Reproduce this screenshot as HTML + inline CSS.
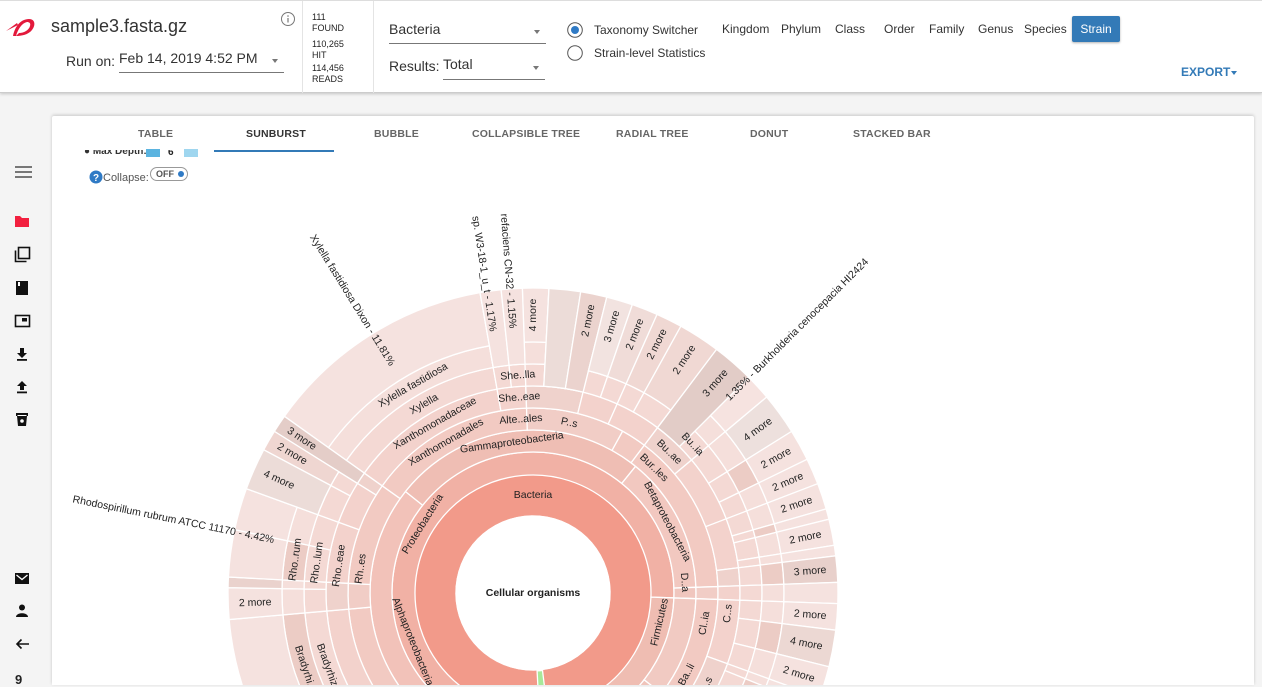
<!DOCTYPE html>
<html><head><meta charset="utf-8">
<style>
*{box-sizing:border-box;margin:0;padding:0}
body{width:1262px;height:685px;overflow:hidden;background:#f4f4f4;font-family:"Liberation Sans",sans-serif;color:#222;position:relative}
#hdr{position:absolute;left:0;top:0;width:1262px;height:93px;background:#fff;border-top:1px solid #ddd;border-bottom:1px solid #ccc;box-shadow:0 1px 3px rgba(0,0,0,.2)}
.a{position:absolute;white-space:nowrap}
.sel{position:absolute;border-bottom:1px solid #777}
.caret{position:absolute;width:0;height:0;border-left:3.5px solid transparent;border-right:3.5px solid transparent;border-top:4px solid #777}
#card{position:absolute;left:52px;top:116px;width:1202px;height:569px;background:#fff;box-shadow:0 -1px 3px rgba(0,0,0,.18);border-radius:2px 2px 0 0;overflow:hidden}
.tab{position:absolute;top:12px;font-size:10.5px;color:#666;font-weight:bold;letter-spacing:.2px}
.ic{position:absolute;left:14px}
</style></head><body>
<div id="hdr">
 <svg class="a" style="left:5px;top:13px" width="32" height="26" viewBox="0 0 32 26"><path d="M8 22 C10 12 16 5 24 5 C30 5 31 11 27 16 C23 21 16 22 11 22 L14 19 C19 19 24 16 25 12 C26 9 24 8 22 8 C17 9 13 15 11 22 Z" fill="#e3193c"/><path d="M1 17 L12 9 L13 11 Z" fill="#e3193c"/></svg>
 <div class="a" style="left:51px;top:15px;font-size:18px;color:#333">sample3.fasta.gz</div>
 <svg class="a" style="left:280px;top:10px" width="16" height="16"><circle cx="8" cy="8" r="6.5" fill="none" stroke="#777" stroke-width="1"/><rect x="7.4" y="7" width="1.2" height="4.5" fill="#777"/><circle cx="8" cy="5" r=".8" fill="#777"/></svg>
 <div class="a" style="left:66px;top:52px;font-size:14px;color:#333">Run on:</div>
 <div class="sel" style="left:119px;top:49px;width:165px;height:23px"><span style="font-size:14px;color:#333">Feb 14, 2019 4:52 PM</span><div class="caret" style="right:6px;top:9px"></div></div>
 <div class="a" style="left:302px;top:0;width:1px;height:92px;background:#e4e4e4"></div>
 <div class="a" style="left:312px;top:11px;font-size:9px;line-height:11px;color:#222">111<br>FOUND</div>
 <div class="a" style="left:312px;top:38px;font-size:9px;line-height:11px;color:#222">110,265<br>HIT</div>
 <div class="a" style="left:312px;top:62px;font-size:9px;line-height:11px;color:#222">114,456<br>READS</div>
 <div class="a" style="left:373px;top:0;width:1px;height:92px;background:#e4e4e4"></div>
 <div class="sel" style="left:389px;top:20px;width:157px;height:23px"><span style="font-size:14px;color:#333">Bacteria</span><div class="caret" style="right:6px;top:9px"></div></div>
 <div class="a" style="left:389px;top:57px;font-size:14px;color:#333">Results:</div>
 <div class="sel" style="left:443px;top:55px;width:102px;height:24px"><span style="font-size:14px;color:#333">Total</span><div class="caret" style="right:6px;top:10px"></div></div>
 <svg class="a" style="left:566px;top:20px" width="18" height="44"><circle cx="9" cy="9" r="7.3" fill="none" stroke="#555" stroke-width="1"/><circle cx="9" cy="9" r="4" fill="#2f7ac5"/><circle cx="9" cy="32" r="7.3" fill="none" stroke="#555" stroke-width="1"/></svg>
 <div class="a" style="left:594px;top:22px;font-size:12px;color:#333">Taxonomy Switcher</div>
 <div class="a" style="left:594px;top:45px;font-size:12px;color:#333">Strain-level Statistics</div>
 <div class="a" style="left:722px;top:21px;font-size:12px;color:#333">Kingdom</div>
 <div class="a" style="left:781px;top:21px;font-size:12px;color:#333">Phylum</div>
 <div class="a" style="left:835px;top:21px;font-size:12px;color:#333">Class</div>
 <div class="a" style="left:884px;top:21px;font-size:12px;color:#333">Order</div>
 <div class="a" style="left:929px;top:21px;font-size:12px;color:#333">Family</div>
 <div class="a" style="left:978px;top:21px;font-size:12px;color:#333">Genus</div>
 <div class="a" style="left:1024px;top:21px;font-size:12px;color:#333">Species</div>
 <div class="a" style="left:1072px;top:15px;width:48px;height:26px;background:#337ab7;border-radius:2px;color:#fff;font-size:12px;text-align:center;line-height:26px;box-shadow:0 1px 2px rgba(0,0,0,.3)">Strain</div>
 <div class="a" style="left:1181px;top:64px;font-size:12px;color:#337ab7;font-weight:bold">EXPORT</div>
 <div class="caret" style="left:1231px;top:70px;border-top-color:#337ab7"></div>
</div>

<div class="a" style="left:15px;top:166px;width:17px;height:2px;background:#777;box-shadow:0 5px 0 #777,0 10px 0 #777"></div>
<svg class="ic" style="top:213px" width="16" height="16"><path d="M1 3 H6 L8 5 H15 V14 H1 Z" fill="#f2203f"/></svg>
<svg class="ic" style="top:246px" width="17" height="17"><rect x="4.5" y="1.5" width="11" height="11" fill="none" stroke="#111" stroke-width="1.6"/><path d="M1.5 4.5 V15.5 H12.5" fill="none" stroke="#111" stroke-width="1.6"/></svg>
<svg class="ic" style="top:280px" width="16" height="16"><rect x="2" y="1" width="12" height="14" fill="#111"/><rect x="4" y="2" width="2" height="4" fill="#fff"/></svg>
<svg class="ic" style="top:313px" width="17" height="16"><rect x="1.5" y="2.5" width="14" height="11" fill="none" stroke="#111" stroke-width="1.6"/><rect x="8" y="5" width="5" height="3.5" fill="#111"/></svg>
<svg class="ic" style="top:346px" width="16" height="16"><path d="M6 2 H10 V7 H13 L8 12 L3 7 H6 Z" fill="#111"/><rect x="3" y="13" width="10" height="1.8" fill="#111"/></svg>
<svg class="ic" style="top:379px" width="16" height="16"><path d="M8 2 L13 7 H10 V11 H6 V7 H3 Z" fill="#111"/><rect x="3" y="12.5" width="10" height="1.8" fill="#111"/></svg>
<svg class="ic" style="top:411px" width="16" height="16"><path d="M2 2 H14 V5 H13 L12 15 H4 L3 5 H2 Z" fill="#111"/><rect x="3.5" y="4" width="9" height="1" fill="#fff"/><circle cx="8" cy="10" r="1.8" fill="#fff"/></svg>
<svg class="ic" style="top:570px" width="16" height="16"><rect x="1" y="3" width="14" height="11" fill="#111"/><path d="M2.5 5 L8 9.5 L13.5 5" fill="none" stroke="#fff" stroke-width="1.3"/></svg>
<svg class="ic" style="top:603px" width="16" height="16"><circle cx="8" cy="4.5" r="3" fill="#111"/><path d="M2 14 C2 9 14 9 14 14 Z" fill="#111"/></svg>
<svg class="ic" style="top:636px" width="16" height="16"><path d="M15 8 H3 M7.5 3.5 L3 8 L7.5 12.5" fill="none" stroke="#111" stroke-width="1.6"/></svg>
<div class="a" style="left:15px;top:672px;font-size:13px;font-weight:bold">9</div>

<div id="card">
 <div class="tab" style="left:86px">TABLE</div>
 <div class="tab" style="left:194px;color:#333">SUNBURST</div>
 <div class="a" style="left:162px;top:34px;width:120px;height:2px;background:#337ab7"></div>
 <div class="tab" style="left:322px">BUBBLE</div>
 <div class="tab" style="left:420px">COLLAPSIBLE TREE</div>
 <div class="tab" style="left:564px">RADIAL TREE</div>
 <div class="tab" style="left:698px">DONUT</div>
 <div class="tab" style="left:801px">STACKED BAR</div>
 <div class="a" style="left:32px;top:30px;font-size:10px;color:#333;font-weight:bold;clip-path:inset(4px 0 0 0)">● Max Depth:</div>
 <div class="a" style="left:94px;top:33px;width:14px;height:8px;background:#5bb4e0"></div>
 <div class="a" style="left:116px;top:31px;font-size:10px;font-weight:bold;clip-path:inset(3px 0 0 0)">6</div>
 <div class="a" style="left:132px;top:33px;width:14px;height:8px;background:#9fd6ef"></div>
 <svg class="a" style="left:37px;top:54px" width="14" height="14"><circle cx="7" cy="7" r="6.5" fill="#2f7ac5"/><text x="7" y="11" font-size="10" font-weight="bold" fill="#fff" text-anchor="middle" font-family="Liberation Sans">?</text></svg>
 <div class="a" style="left:51px;top:56px;font-size:11px;color:#555">Collapse:</div>
 <div class="a" style="left:98px;top:51px;width:38px;height:14px;border:1px solid #999;border-radius:8px;font-size:9px;font-weight:bold;color:#555;padding-left:5px;line-height:12px">OFF<span style="position:absolute;right:3px;top:3px;width:6px;height:6px;border-radius:3px;background:#2f7ac5"></span></div>
 <svg id="sb" class="a" style="left:-52px;top:-116px" width="1262" height="685"></svg>
</div>
<script>
var CX=533,CY=593,NS="http://www.w3.org/2000/svg",svg=document.getElementById('sb');
function pt(r,t){t=t*Math.PI/180;return [CX+r*Math.sin(t),CY-r*Math.cos(t)];}
function arc(r0,r1,a0,a1,f,ns){
 if(a1-a0>300){var m=(a0+a1)/2;arc(r0,r1,a0,m,f,1);arc(r0,r1,m,a1,f,1);return;}
 var p=pt(r1,a0),q=pt(r1,a1),s=pt(r0,a1),u=pt(r0,a0),l=(a1-a0)>180?1:0;
 var d="M"+p+"A"+r1+","+r1+" 0 "+l+" 1 "+q+"L"+s+(r0>0?"A"+r0+","+r0+" 0 "+l+" 0 "+u:"")+"Z";
 var e=document.createElementNS(NS,'path');e.setAttribute('d',d);e.setAttribute('fill',f);
 if(ns){e.setAttribute('stroke',f);e.setAttribute('stroke-width','0.5');}else{e.setAttribute('stroke','#fff');e.setAttribute('stroke-width','1.3');}
 svg.appendChild(e);}
function txt(s,r,t,mode,sz,bold){var p=pt(r,t),rot;
 if(mode=='t'){rot=Math.abs(t)>90?(t>0?t-180:t+180):t;}else{rot=t>=0?t-90:t+90;}
 var e=document.createElementNS(NS,'text');e.setAttribute('x',0);e.setAttribute('y',0);e.setAttribute('text-anchor','middle');e.setAttribute('dominant-baseline','central');
 e.setAttribute('transform','translate('+p[0].toFixed(1)+','+p[1].toFixed(1)+') rotate('+rot.toFixed(1)+')');
 e.setAttribute('font-size',sz||10.5);e.setAttribute('font-family','Liberation Sans, DejaVu Sans, sans-serif');e.setAttribute('fill','#222');if(bold)e.setAttribute('font-weight','bold');e.textContent=s;svg.appendChild(e);}
var R=[78,118,141,163,185,207,229,251,305];
arc(78,118,-186,173,'#f29a8a');arc(78,118,173,177,'#a8e89a');
arc(118,141,-200,92,'#f1b1a5');arc(118,141,92,150,'#efbdb2');arc(118,141,150,175,'#f1b8ad');
arc(141,163,-200,-51.5,'#f2c2b9');arc(141,163,-51.5,39,'#efbeb4');arc(141,163,39,88,'#f2c8c0');arc(141,163,88,92,'#f0c6be');arc(141,163,92,128,'#f1cac2');arc(141,163,128,150,'#f0c4bb');arc(141,163,150,175,'#f2cbc3');
var segs=[
[-200,-150],[-150,-95],[-95,-89],[-89,-87],[-87,-78],[-78,-70],[-70,-62],[-62,-58],[-58,-54.6],[-54.6,-10],[-10,-6],[-6,-2],[-2,3],[3,9],[9,14],[14,19],[19,24],[24,29],[29,37],[37,45],[45,50],[50,58],[58,64],[64,69],[69,74],[74,76],[76,81],[81,83],[83,88],[88,92],[92,97],[97,104],[104,110],[110,112],[112,120],[120,128],[128,140],[140,150],[150,175]];
var shades=['#f3d4ce','#f1cdc6','#efd2cc','#f4d9d4','#ecccc5'];
for(var ring=3;ring<7;ring++){
 var base=['#f2cac2','#f3d2cc','#f4d9d4','#f5dfdb'][ring-3];
 var list=ring==3?[[-200,-95],[-95,-87],[-87,-54.6],[-54.6,-2],[-2,29],[29,37],[37,88],[88,92],[92,128],[128,150],[150,175]]:
          ring==4?[[-200,-95],[-95,-87],[-87,-70],[-70,-58],[-58,-54.6],[-54.6,-10],[-10,-2],[-2,14],[14,24],[24,37],[37,50],[50,69],[69,83],[83,88],[88,92],[92,110],[110,128],[128,150],[150,175]]:segs;
 list.forEach(function(s,i){arc(R[ring],R[ring+1],s[0],s[1],i%3==1?shades[ring-2]:base);});
}
var strainC={'-58,-54.6':'#e4cdc8','-62,-58':'#efd6d1','-70,-62':'#ecdcd8','3,9':'#ecdcd8','9,14':'#ebd3ce','37,45':'#e2ccc7','50,58':'#ede0dd','83,88':'#e8d0cb','97,104':'#ecd8d3','-89,-87':'#ead2cd'};
segs.forEach(function(s){arc(251,305,s[0],s[1],strainC[s.join(',')]||'#f5e2df');});
arc(207,305,-58,-54.6,'#e4cdc8');arc(229,305,-62,-58,'#efd6d1');arc(229,305,-70,-62,'#ecdcd8');
arc(207,305,3,9,'#ecdcd8');arc(207,305,9,14,'#ebd3ce');arc(229,305,14,19,'#f2e3e0');arc(229,305,19,24,'#f0dcd8');arc(229,305,24,29,'#f0d8d3');arc(229,305,29,37,'#f0d8d3');arc(207,305,37,45,'#e2ccc7');
arc(229,305,-10,-6,'#f5e2df');arc(229,305,-6,-2,'#f5e2df');arc(251,305,45,50,'#f6e3e0');
txt('Cellular organisms',0,0,'t',10.5,true);
txt('Bacteria',98,0,'t');txt('Proteobacteria',130,-58,'t');txt('Alphaproteobacteria',130,-112,'t');txt('Firmicutes',130,103,'t');
txt('Gammaproteobacteria',152,-8,'t');txt('Betaproteobacteria',152,62,'t');txt('D..a',152,86,'t');
txt('Xanthomonadales',174,-30,'t');txt('Alte..ales',174,-4,'t');txt('P..s',174,12,'t');txt('Bur..les',174,44,'t');txt('Rh..es',174,-82,'t');txt('Cl..ia',174,100,'t');txt('Ba..li',174,118,'t');
txt('Xanthomonadaceae',196,-30,'t');txt('She..eae',196,-4,'t');txt('Bu..ae',196,44,'t');txt('Rho..eae',196,-82,'t');txt('C..s',196,96,'t');txt('L..s',196,118,'t');
txt('Xylella',218,-30,'t');txt('She..lla',218,-4,'t');txt('Bu..ia',218,47,'t');txt('Rho..lum',218,-82,'t');txt('Bradyrhizo',218,-110,'t');
txt('Xylella fastidiosa',240,-30,'t');txt('Rho..rum',240,-82,'t');txt('Bradyrhi..',240,-108,'t');
[['3 more',-56.3],['2 more',-60],['4 more',-66],['2 more',-92],['4 more',0],['2 more',11.5],['3 more',16.5],['2 more',21.5],['2 more',26.5],['2 more',33],['3 more',41],['4 more',54],['2 more',61],['2 more',66.5],['2 more',71.5],['2 more',78.5],['3 more',85.5],['2 more',94.5],['4 more',100.5],['2 more',107],['4 more',116]].forEach(function(a){txt(a[0],278,a[1],'r');});
txt('Xylella fastidiosa Dixon - 11.81%',344,-31.7,'r');
txt('Rhodospirillum rubrum ATCC 11170 - 4.42%',367,-78.5,'r');
txt('sp. W3-18-1_u_t - 1.17%',323,-8.7,'r');
txt('refaciens CN-32 - 1.15%',323,-4.4,'r');
txt('1.35% - Burkholderia cenocepacia HI2424',373,45.1,'r');
</script>
</body></html>
